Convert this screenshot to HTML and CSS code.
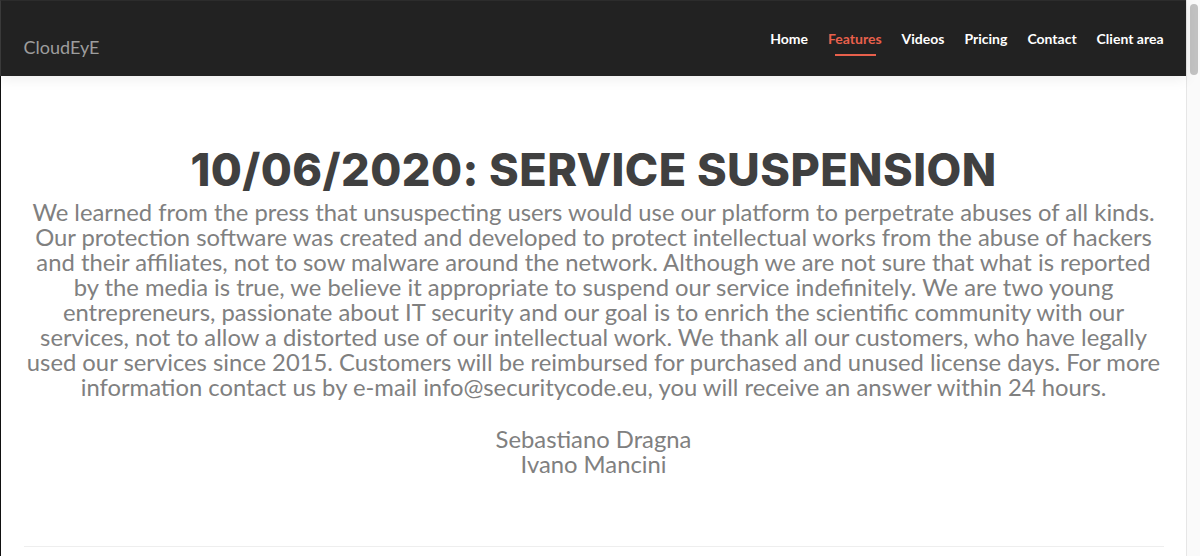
FILE: index.html
```html
<!DOCTYPE html>
<html lang="en">
<head>
<meta charset="utf-8">
<title>CloudEyE</title>
<link rel="stylesheet" href="styles.css">
</head>
<body>
<div class="page">
  <header class="navbar">
    <div class="container nav-inner">
      <a class="brand" href="#">CloudEyE</a>
      <nav class="nav">
        <a href="#">Home</a>
        <a href="#" class="active">Features</a>
        <a href="#">Videos</a>
        <a href="#">Pricing</a>
        <a href="#">Contact</a>
        <a href="#">Client area</a>
      </nav>
    </div>
  </header>
  <main class="main">
    <div class="container">
      <h1 class="title">10/06/2020: SERVICE SUSPENSION</h1>
      <p class="notice">We learned from the press that unsuspecting users would use our platform to perpetrate abuses of all kinds.<br>
      Our protection software was created and developed to protect intellectual works from the abuse of hackers<br>
      and their affiliates, not to sow malware around the network. Although we are not sure that what is reported<br>
      by the media is true, we believe it appropriate to suspend our service indefinitely. We are two young<br>
      entrepreneurs, passionate about IT security and our goal is to enrich the scientific community with our<br>
      services, not to allow a distorted use of our intellectual work. We thank all our customers, who have legally<br>
      used our services since 2015. Customers will be reimbursed for purchased and unused license days. For more<br>
      information contact us by e-mail info@securitycode.eu, you will receive an answer within 24 hours.</p>
      <p class="signature">Sebastiano Dragna<br>Ivano Mancini</p>
      <hr class="rule">
    </div>
  </main>
</div>
<div class="scrollbar"><div class="thumb"></div></div>
</body>
</html>
```
FILE: styles.css
```css
* { box-sizing: border-box; }
html, body { margin: 0; padding: 0; }
body {
  display: flex;
  width: 1200px;
  height: 556px;
  overflow: hidden;
  background: #fff;
  font-family: Lato, "Liberation Sans", sans-serif;
}
.page {
  flex: 1;
  min-width: 0;
  display: flex;
  flex-direction: column;
}
.container {
  width: 1140px;
  margin: 0 auto;
}
.navbar {
  height: 76px;
  background: #222;
  border-top: 1px solid #2c2c2c;
  border-left: 1px solid #3a3a3a;
  box-shadow: 0 2px 14px rgba(0,0,0,0.08);
  position: relative;
  z-index: 1;
}
.nav-inner {
  height: 100%;
  display: flex;
  justify-content: space-between;
  align-items: flex-start;
}
.brand {
  margin-top: 35px;
  font-size: 18px;
  line-height: 22px;
  color: #9d9d9d;
  text-decoration: none;
}
.nav {
  display: flex;
  gap: 20px;
  margin-top: 28px;
}
.nav a {
  position: relative;
  font-size: 14px;
  font-weight: 700;
  line-height: 20px;
  color: #fff;
  text-decoration: none;
}
.nav a.active { color: #e8604c; }
.nav a.active::after {
  content: "";
  position: absolute;
  left: 7px;
  right: 6px;
  top: 25px;
  height: 2px;
  background: #e8604c;
}
.main {
  flex: 1;
  border-left: 1px solid #111;
  padding-top: 69px;
}
.title {
  margin: 0;
  text-align: center;
  font-family: Inter, "Open Sans", sans-serif;
  font-weight: 800;
  font-size: 45px;
  line-height: 50px;
  color: #404040;
  letter-spacing: 0.45px;
}
.notice {
  margin: 5px -20px 0;
  text-align: center;
  font-size: 23.8px;
  line-height: 25px;
  color: #808080;
}
.signature {
  margin: 27px 0 0;
  text-align: center;
  font-size: 23.8px;
  line-height: 25px;
  color: #808080;
}
.rule {
  margin: 69px 0 0;
  border: 0;
  border-top: 1px solid #eee;
}
.scrollbar {
  width: 14px;
  flex: none;
  background: #fafafa;
  border-left: 1px solid #e6e6e6;
  padding: 4px 2px 0 3px;
}
.thumb {
  height: 71px;
  border-radius: 4px;
  background: #c2c2c2;
}
```
